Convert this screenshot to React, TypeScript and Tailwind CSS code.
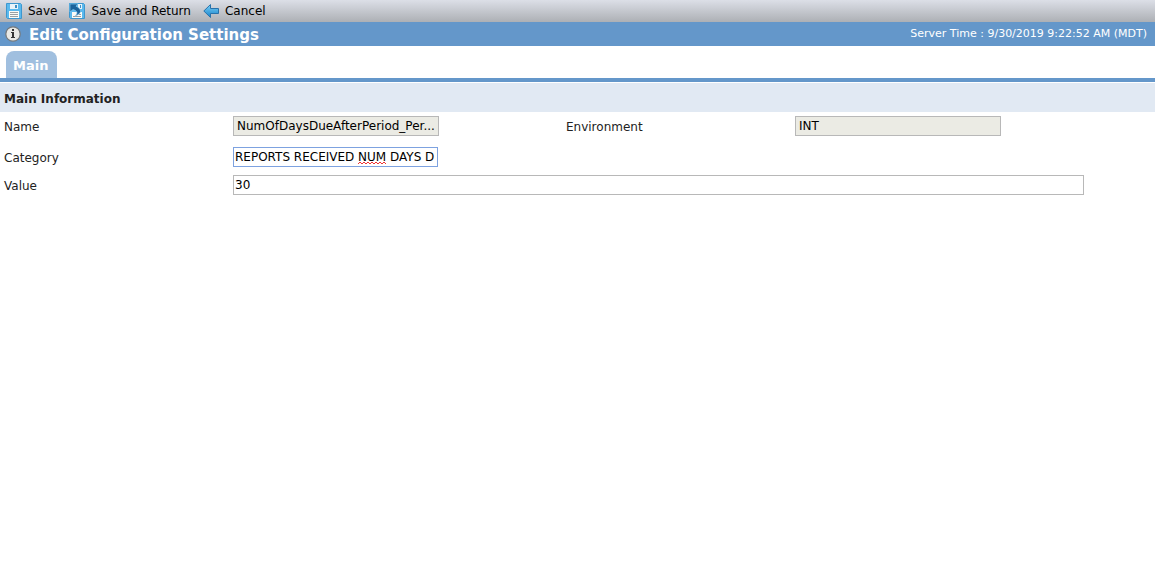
import { useState } from 'react'
import type { ReactNode } from 'react'
import clsx from 'clsx'

function SaveIcon() {
  return (
    <svg width="16" height="16" viewBox="0 0 16 16" aria-hidden="true">
      <path d="M.5.5h14l1 1v14h-14l-1-1z" fill="#5ab9ee" stroke="#3d97cf" />
      <path d="M4 1h8v5H4z" fill="#e9f3f9" />
      <path d="M9 2h2v3H9z" fill="#3f8fc4" />
      <path d="M3 8h10v7H3z" fill="#fbfbf6" />
      <path d="M4 9.5h8M4 11.5h8M4 13.5h8" stroke="#9aa0a3" />
    </svg>
  )
}

function SaveReturnIcon() {
  return (
    <svg width="16" height="16" viewBox="0 0 16 16" aria-hidden="true">
      <path d="M.5.5h14l1 1v14h-14l-1-1z" fill="#5ab9ee" stroke="#3d97cf" />
      <path d="M9 1h4v5H9z" fill="#e9f3f9" />
      <path d="M11 2h1v3h-1z" fill="#3f8fc4" />
      <path d="M3 9h10v6H3z" fill="#fbfbf6" />
      <path d="M4 13.5h8M10 11.5h2" stroke="#9aa0a3" />
      <path d="M1 1h8L7 3.2c3 1.3 4.8 3.300 4.500 5.300C11.200 10.500 9 12 6 13c2-1.800 2.500-3.300 1.500-4.500C6.800 7.600 5.700 7 4 6.500L1 9z" fill="#1b629b" stroke="#8fd0f5" strokeWidth=".6" />
    </svg>
  )
}

function BackIcon() {
  return (
    <svg width="16" height="16" viewBox="0 0 16 16" aria-hidden="true">
      <defs>
        <linearGradient id="back" x2="0" y2="1">
          <stop stopColor="#7dd0f7" />
          <stop offset="1" stopColor="#1583cb" />
        </linearGradient>
      </defs>
      <path d="M.8 8 7.5 1.5v4h8v5h-8v4z" fill="url(#back)" stroke="#2872ab" strokeLinejoin="round" />
    </svg>
  )
}

function InfoIcon() {
  return (
    <svg width="16" height="16" viewBox="0 0 16 16" aria-hidden="true">
      <circle cx="8" cy="8" r="7.2" fill="#e8e8e5" stroke="#74787b" strokeWidth="1.2" />
      <path d="M7 3h2v2H7zM6 6h3v5h1v1H6v-1h1V7H6z" fill="#333" />
    </svg>
  )
}

function ToolbarButton({ icon, children }: { icon: ReactNode; children: ReactNode }) {
  return (
    <button type="button" className="flex items-center gap-[6px] text-black">
      {icon}
      {children}
    </button>
  )
}

const field = 'block h-5 border text-xs text-black outline-none'
const readOnlyField = 'w-[206px] border-[#b8b8b8] bg-[#ebebe4] px-[3px]'
const label = 'pt-[2px]'

export default function App() {
  const [category, setCategory] = useState('REPORTS RECEIVED NUM DAYS D')
  const [value, setValue] = useState('30')

  return (
    <div className="bg-white font-['Verdana','DejaVu_Sans',sans-serif] text-xs text-[#222]">
      {/* Toolbar */}
      <div className="flex h-[22px] items-center gap-3 bg-linear-to-b from-[#dcdfe7] to-[#adb0b5] px-[6px]">
        <ToolbarButton icon={<SaveIcon />}>Save</ToolbarButton>
        <ToolbarButton icon={<SaveReturnIcon />}>Save and Return</ToolbarButton>
        <ToolbarButton icon={<BackIcon />}>Cancel</ToolbarButton>
      </div>

      {/* Title bar */}
      <header className="flex h-6 items-center gap-2 bg-[#6497ca] pr-2 pl-[5px] text-white">
        <InfoIcon />
        <h1 className="pt-[2px] text-[15px] leading-5 font-bold">Edit Configuration Settings</h1>
        <span className="ml-auto text-[11px]">Server Time : 9/30/2019 9:22:52 AM (MDT)</span>
      </header>

      {/* Tabs */}
      <nav className="flex border-b-4 border-[#6497ca] px-[6px] pt-[5px]">
        <a href="#main" className="flex h-[27px] items-center rounded-t-lg bg-[#a0bfdf] pt-[2px] pr-[9px] pl-[7px] text-[13px] font-bold text-white">
          Main
        </a>
      </nav>

      <main id="main">
        <h2 className="mt-px flex h-[29px] items-center bg-[#e1e9f3] px-1 pt-[2px] font-bold">Main Information</h2>

        <form className="grid grid-cols-[229fr_333fr_229fr_356fr] items-center gap-y-2 px-1 pt-1">
          <label htmlFor="name" className={label}>Name</label>
          <input id="name" className={clsx(field, readOnlyField)} value="NumOfDaysDueAfterPeriod_Per..." readOnly />
          <label htmlFor="environment" className={label}>Environment</label>
          <input id="environment" className={clsx(field, readOnlyField)} value="INT" readOnly />

          <label htmlFor="category" className="pt-[5px]">Category</label>
          <div className="relative col-span-3 pt-[3px]">
            <input
              id="category"
              className={clsx(field, 'w-[205px] border-[#7da2e0] pl-px')}
              value={category}
              onChange={e => setCategory(e.target.value)}
            />
            {/* Spelling mark under NUM */}
            <svg className="absolute bottom-0.5 left-[125px]" width="29" height="4" viewBox="0 0 29 4" aria-hidden="true">
              <path d="M0 3 2 1l2 2 2-2 2 2 2-2 2 2 2-2 2 2 2-2 2 2 2-2 2 2 2-2 2 2" fill="none" stroke="#e33" />
            </svg>
          </div>

          <label htmlFor="value" className={label}>Value</label>
          <div className="col-span-3 pr-[67px]">
            <input
              id="value"
              className={clsx(field, 'w-full border-[#b8b8b8] pl-px')}
              value={value}
              onChange={e => setValue(e.target.value)}
            />
          </div>
        </form>
      </main>
    </div>
  )
}
